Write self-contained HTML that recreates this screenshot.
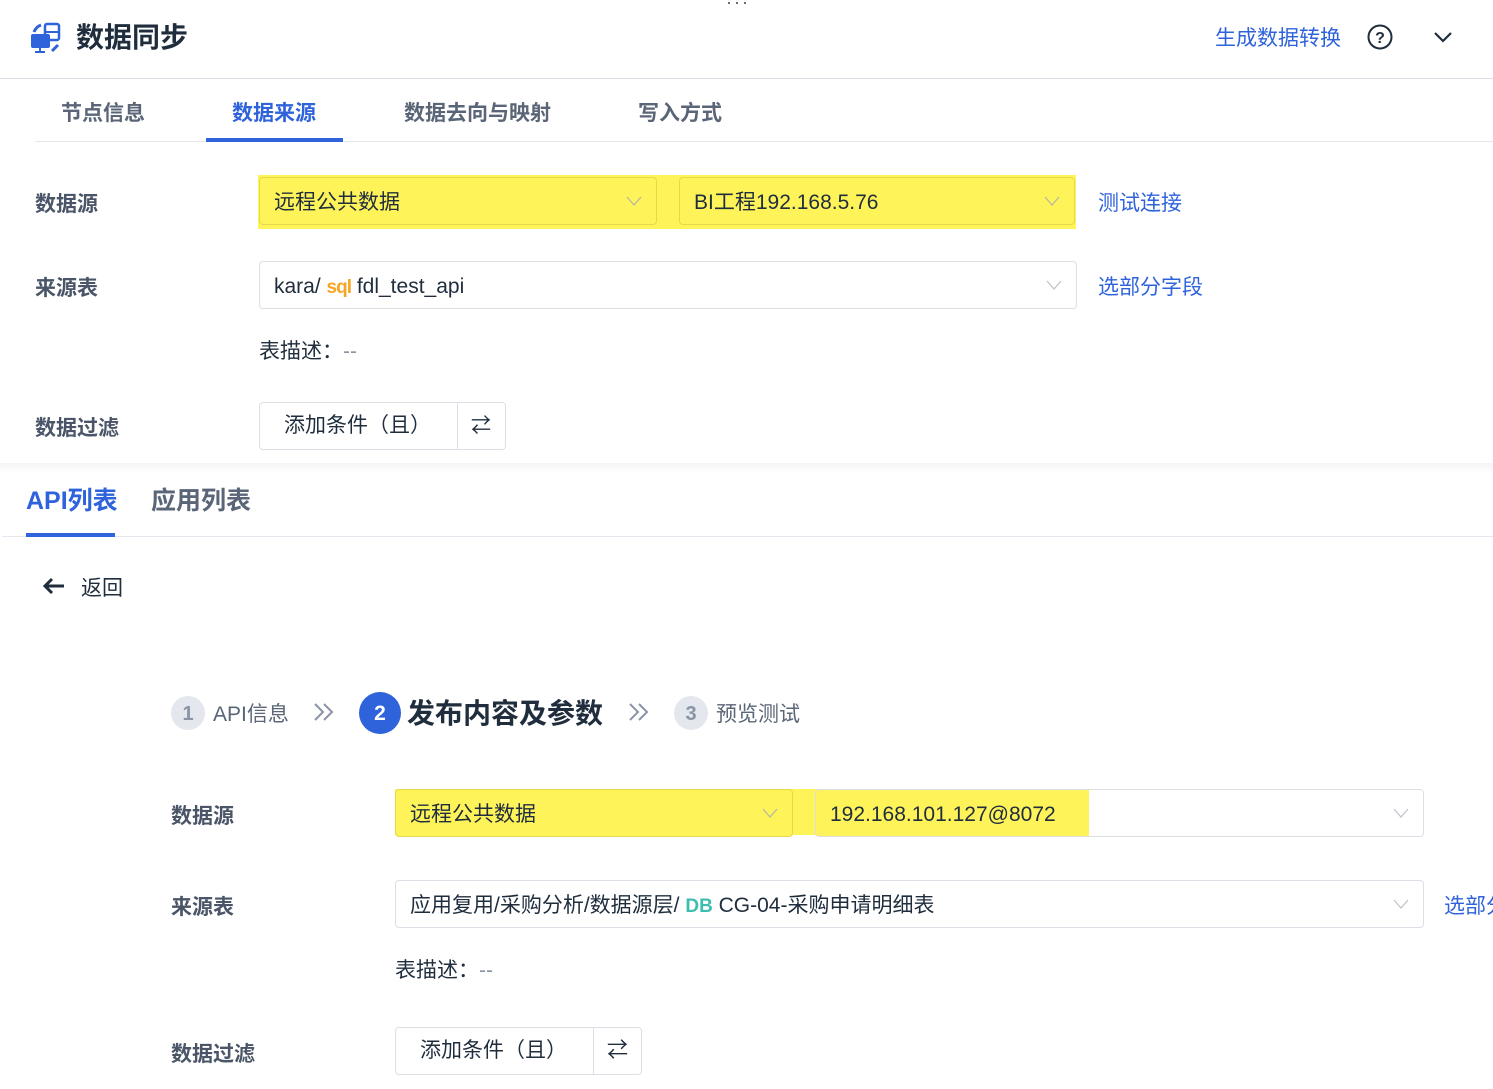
<!DOCTYPE html>
<html><head><meta charset="utf-8"><style>
*{margin:0;padding:0;box-sizing:border-box}
body{width:1493px;height:1089px;background:#fff;position:relative;overflow:hidden;font-family:"Liberation Sans","Noto Sans CJK SC",sans-serif;color:#1f2d3d}
.a{position:absolute;white-space:nowrap}
.lbl{font-size:21px;font-weight:bold;color:#4a5568}
.field{position:absolute;border:1px solid #dcdfe6;border-radius:4px;height:48px;font-size:21px;padding-left:14px;padding-top:3px;line-height:44px;color:#1f2d3d}
.chev{position:absolute;right:14px;top:18px;width:16px;height:10px}
.link{color:#2f63db;font-size:21px}
.btn{position:absolute;border:1px solid #dcdfe6;border-radius:4px;height:48px;font-size:21px;line-height:46px;color:#1f2d3d}
.dc{position:absolute}
</style></head><body>
<div class="a" style="left:726px;top:-8px;font-size:18px;color:#555;letter-spacing:2px">···</div>
<svg class="a" style="left:30px;top:22px" width="32" height="32" viewBox="0 0 32 32">
<path d="M4 10 A12 12 0 0 1 11 3" stroke="#2f63db" stroke-width="3" fill="none"/>
<rect x="15" y="2" width="14" height="16" rx="2" fill="none" stroke="#2f63db" stroke-width="2.5"/>
<line x1="15" y1="10" x2="29" y2="10" stroke="#2f63db" stroke-width="2"/>
<rect x="1" y="12" width="19" height="14" rx="2" fill="#2f63db"/>
<line x1="10" y1="26" x2="10" y2="30" stroke="#2f63db" stroke-width="2"/>
<line x1="5" y1="30" x2="15" y2="30" stroke="#2f63db" stroke-width="2"/>
<path d="M22 29 L28 23" stroke="#2f63db" stroke-width="3"/>
</svg>
<div class="a" style="left:76px;top:16px;font-size:28px;font-weight:bold;color:#1f2d3d">数据同步</div>
<div class="a link" style="left:1215px;top:22px">生成数据转换</div>
<svg class="a" style="left:1367px;top:24px" width="26" height="26" viewBox="0 0 26 26"><circle cx="13" cy="13" r="11.5" fill="none" stroke="#1f2d3d" stroke-width="2"/><text x="13" y="19" font-size="16" text-anchor="middle" fill="#1f2d3d" font-family="Liberation Sans" font-weight="bold">?</text></svg>
<svg class="a" style="left:1433px;top:31px" width="20" height="12" viewBox="0 0 20 12"><path d="M2 2 L10 10 L18 2" fill="none" stroke="#1f2d3d" stroke-width="2.2"/></svg>
<div class="a" style="left:0;top:78px;width:1493px;height:1px;background:#dcdfe6"></div>

<div class="a lbl" style="left:61px;top:97px;color:#5a6577">节点信息</div>
<div class="a lbl" style="left:232px;top:97px;color:#2f63db">数据来源</div>
<div class="a lbl" style="left:404px;top:97px;color:#5a6577">数据去向与映射</div>
<div class="a lbl" style="left:638px;top:97px;color:#5a6577">写入方式</div>
<div class="a" style="left:35px;top:141px;width:1458px;height:1px;background:#e4e7ed"></div>
<div class="a" style="left:206px;top:138px;width:137px;height:4px;background:#2f63db"></div>

<div class="a lbl" style="left:35px;top:188px">数据源</div>
<div class="a" style="left:258px;top:175px;width:818px;height:54px;background:#fff35a"></div>
<div class="field" style="left:259px;top:177px;width:398px;border-color:#e6d94a">远程公共数据<svg class="chev" viewBox="0 0 16 10"><path d="M1 1 L8 9 L15 1" fill="none" stroke="#b8b8a0" stroke-width="1.3"/></svg></div>
<div class="field" style="left:679px;top:177px;width:396px;border-color:#e6d94a">BI工程192.168.5.76<svg class="chev" viewBox="0 0 16 10"><path d="M1 1 L8 9 L15 1" fill="none" stroke="#b8b8a0" stroke-width="1.3"/></svg></div>
<div class="a link" style="left:1098px;top:187px">测试连接</div>

<div class="a lbl" style="left:35px;top:272px">来源表</div>
<div class="field" style="left:259px;top:261px;width:818px">kara/ <span style="color:#f5a623;font-weight:bold;font-size:19px;letter-spacing:-1px">sql</span> fdl_test_api<svg class="chev" viewBox="0 0 16 10"><path d="M1 1 L8 9 L15 1" fill="none" stroke="#c0c4cc" stroke-width="1.3"/></svg></div>
<div class="a link" style="left:1098px;top:271px">选部分字段</div>
<div class="a" style="left:259px;top:335px;font-size:21px">表描述：<span style="color:#8a94a6">--</span></div>

<div class="a lbl" style="left:35px;top:412px">数据过滤</div>
<div class="btn" style="left:259px;top:402px;width:247px"><span style="position:absolute;left:24px">添加条件（且）</span><div style="position:absolute;left:197px;top:0;width:1px;height:46px;background:#dcdfe6"></div><span style="position:absolute;left:211px;font-size:20px">⇄</span></div>

<div class="a" style="left:0;top:463px;width:1493px;height:10px;background:linear-gradient(#f3f4f6,#fff)"></div>
<div class="a" style="left:26px;top:481px;font-size:25px;font-weight:bold;color:#2f63db">API列表</div>
<div class="a" style="left:151px;top:481px;font-size:25px;font-weight:bold;color:#5a6577">应用列表</div>
<div class="a" style="left:2px;top:536px;width:1491px;height:1px;background:#e4e7ed"></div>
<div class="a" style="left:26px;top:533px;width:89px;height:4px;background:#2f63db"></div>
<svg class="a" style="left:42px;top:576px" width="24" height="20" viewBox="0 0 24 20"><path d="M22 10 H3 M10 3 L3 10 L10 17" fill="none" stroke="#1f2d3d" stroke-width="3"/></svg>
<div class="a" style="left:81px;top:572px;font-size:21px">返回</div>

<div class="a" style="left:171px;top:696px;width:34px;height:34px;border-radius:50%;background:#e4e7ed;color:#8a94a6;font-size:20px;font-weight:bold;text-align:center;line-height:36px">1</div>
<div class="a" style="left:213px;top:698px;font-size:21px;color:#5a6577">API信息</div>
<svg class="dc" style="left:313px;top:702px" width="22" height="20" viewBox="0 0 22 20"><path d="M2 2 L10 10 L2 18 M11 2 L19 10 L11 18" fill="none" stroke="#8a94a6" stroke-width="2"/></svg>
<div class="a" style="left:359px;top:692px;width:42px;height:42px;border-radius:50%;background:#2f63db;color:#fff;font-size:21px;font-weight:bold;text-align:center;line-height:43px">2</div>
<div class="a" style="left:407px;top:692px;font-size:28px;font-weight:bold;color:#1f2d3d">发布内容及参数</div>
<svg class="dc" style="left:628px;top:702px" width="22" height="20" viewBox="0 0 22 20"><path d="M2 2 L10 10 L2 18 M11 2 L19 10 L11 18" fill="none" stroke="#8a94a6" stroke-width="2"/></svg>
<div class="a" style="left:674px;top:696px;width:34px;height:34px;border-radius:50%;background:#e4e7ed;color:#8a94a6;font-size:20px;font-weight:bold;text-align:center;line-height:36px">3</div>
<div class="a" style="left:716px;top:698px;font-size:21px;color:#5a6577">预览测试</div>

<div class="a lbl" style="left:171px;top:800px">数据源</div>
<div class="a" style="left:395px;top:789px;width:693px;height:46px;background:#fff35a"></div>
<div class="field" style="left:395px;top:789px;width:398px;border-color:#e6d94a;background:#fff35a">远程公共数据<svg class="chev" viewBox="0 0 16 10"><path d="M1 1 L8 9 L15 1" fill="none" stroke="#b8b8a0" stroke-width="1.3"/></svg></div>
<div class="field" style="left:815px;top:789px;width:609px;background:linear-gradient(90deg,#fff35a 0,#fff35a 273px,#fff 273px)">192.168.101.127@8072<svg class="chev" viewBox="0 0 16 10"><path d="M1 1 L8 9 L15 1" fill="none" stroke="#c0c4cc" stroke-width="1.3"/></svg></div>

<div class="a lbl" style="left:171px;top:891px">来源表</div>
<div class="field" style="left:395px;top:880px;width:1029px">应用复用/采购分析/数据源层/ <span style="color:#3dbdb0;font-weight:bold;font-size:19px">DB</span> CG-04-采购申请明细表<svg class="chev" viewBox="0 0 16 10"><path d="M1 1 L8 9 L15 1" fill="none" stroke="#c0c4cc" stroke-width="1.3"/></svg></div>
<div class="a link" style="left:1444px;top:890px">选部分字段</div>
<div class="a" style="left:395px;top:954px;font-size:21px">表描述：<span style="color:#8a94a6">--</span></div>

<div class="a lbl" style="left:171px;top:1038px">数据过滤</div>
<div class="btn" style="left:395px;top:1027px;width:247px"><span style="position:absolute;left:24px">添加条件（且）</span><div style="position:absolute;left:197px;top:0;width:1px;height:46px;background:#dcdfe6"></div><span style="position:absolute;left:211px">⇄</span></div>
</body></html>
